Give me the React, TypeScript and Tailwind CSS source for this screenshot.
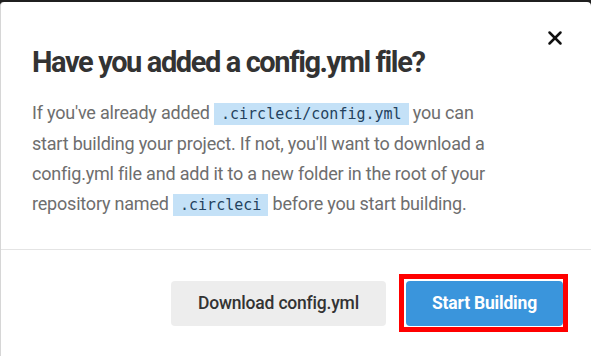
import { X } from "lucide-react";

function Code({ children }: { children: string }) {
  return (
    <code className="bg-[#c4e1f7] px-[7px] py-[2px] text-[15px] tracking-normal text-[#23415e] [font-family:'DejaVu_Sans_Mono',monospace]">
      {children}
    </code>
  );
}

export default function App() {
  return (
    <div className="h-[356px] w-[591px] bg-[#1f1f1f] pt-[2px] [font-family:Roboto,'Liberation_Sans',sans-serif]">
      <div className="relative flex h-full flex-col rounded-t-[4px] border-l border-[#d6d6d6] bg-white">
        {/* Close */}
        <button className="absolute right-[25px] top-[25px] text-[#111]">
          <X size={22} strokeWidth={2.75} />
        </button>

        {/* Body */}
        <div className="px-[31px] pt-[42px] pb-[29px]">
          <h2 className="text-[29px] font-bold leading-[36px] tracking-[-1.4px] text-[#333]">
            Have you added a config.yml file?
          </h2>
          <p className="mt-[18px] w-[472px] text-[18px] leading-[30px] tracking-[-0.2px] text-[#6e6e6e]">
            If you've already added <Code>.circleci/config.yml</Code> you can start building your project. If not,
            you'll want to download a config.yml file and add it to a new folder in the root of your repository named{" "}
            <Code>.circleci</Code> before you start building.
          </p>
        </div>

        <div className="border-t border-[#e4e4e4]" />

        {/* Footer */}
        <div className="flex justify-end gap-[20px] pr-[28px] pt-[31px]">
          <button className="h-[45px] w-[215px] rounded-[4px] bg-[#ededed] text-[17.5px] font-medium tracking-[-0.2px] text-[#333]">
            Download config.yml
          </button>
          <div className="relative">
            <button className="h-[45px] w-[157px] rounded-[4px] bg-[#3a95dc] text-[17.5px] font-bold tracking-[-0.2px] text-white">
              Start Building
            </button>
            {/* highlight annotation */}
            <span className="pointer-events-none absolute -top-[7px] -left-[7px] -right-[5px] -bottom-[6px] border-[5px] border-[#ff0000]" />
          </div>
        </div>
      </div>
    </div>
  );
}
